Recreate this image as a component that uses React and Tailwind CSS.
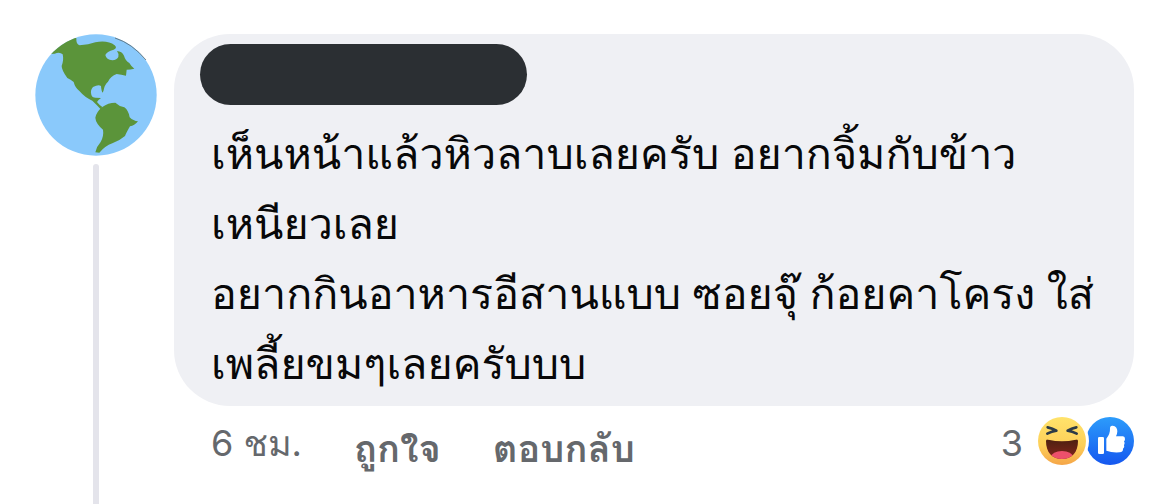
function Globe() {
  return (
    <svg viewBox="45 42 364 366" className="size-[122px] shrink-0" role="img" aria-label="Globe">
      <defs>
        <clipPath id="globe-disc">
          <circle cx="227" cy="225" r="182" />
        </clipPath>
      </defs>
      <circle cx="227" cy="225" r="182" fill="#8ac9fb" />
      <g clipPath="url(#globe-disc)" fill="#5b943a">
        <path d="M88 102 Q120 50 168 54 Q167 74 178 76 Q205 74 225 67 Q262 60 283 76 Q292 84 280 89 Q259 94 255 105 Q258 120 276 121 Q290 120 294 111 Q296 100 290 93 Q305 94 311 107 Q315 122 327 129 Q333 140 342 146 Q330 149 319 149 L317 167 Q303 164 289 162 Q271 168 263 185 Q252 195 250 211 L247 218 Q243 214 242 198 Q234 193 218 201 Q209 211 213 224 Q215 233 226 233 L242 234 Q233 240 230 246 Q236 254 246 261 L241 268 Q230 255 216 242 Q194 233 178 214 Q164 203 160 186 Q151 178 141 174 Q124 151 124 138 Q131 119 127 103 Q118 94 103 101 Z" />
        <path d="M246 261 Q263 248 285 248 Q298 260 312 262 Q325 272 328 292 Q339 303 353 304 Q342 317 329 319 Q318 338 314 348 Q295 364 276 370 Q254 378 237 398 L225 397 Q229 379 241 366 Q251 347 248 329 Q226 310 225 293 Q228 276 246 261 Z" />
      </g>
      <path d="M284 54 Q335 70 377 120" fill="none" stroke="#49504c" strokeWidth="2" />
    </svg>
  );
}

function Haha() {
  return (
    <svg viewBox="0 0 144 144" className="size-12" role="img" aria-label="Haha">
      <defs>
        <linearGradient id="haha-face" x1="0" y1="0" x2="0" y2="1">
          <stop offset="0" stopColor="#ffe36b" />
          <stop offset="0.6" stopColor="#fdcf58" />
          <stop offset="1" stopColor="#f5a548" />
        </linearGradient>
        <linearGradient id="haha-mouth" x1="0" y1="0" x2="0" y2="1">
          <stop offset="0" stopColor="#47200f" />
          <stop offset="1" stopColor="#86251d" />
        </linearGradient>
        <clipPath id="haha-mouth-clip">
          <path d="M24 72 Q24 67 31 68 Q72 78 113 68 Q120 67 120 72 C120 106 102 126 72 126 C42 126 24 106 24 72 Z" />
        </clipPath>
      </defs>
      <circle cx="72" cy="72" r="72" fill="url(#haha-face)" />
      <g clipPath="url(#haha-mouth-clip)">
        <rect x="20" y="60" width="104" height="70" fill="url(#haha-mouth)" />
        <ellipse cx="72" cy="120" rx="33" ry="18" fill="#ed506b" />
      </g>
      <g fill="none" stroke="#2c3b47" strokeWidth="8" strokeLinecap="round" strokeLinejoin="round">
        <path d="M29 31 Q44 34 55 41 Q41 43 28 50" />
        <path d="M115 31 Q100 34 89 41 Q103 43 116 50" />
      </g>
    </svg>
  );
}

function Like() {
  return (
    <svg viewBox="0 0 144 144" className="size-12" role="img" aria-label="Like">
      <defs>
        <linearGradient id="like-fill" x1="0" y1="0" x2="0" y2="1">
          <stop offset="0" stopColor="#2c9cfb" />
          <stop offset="1" stopColor="#1557ef" />
        </linearGradient>
      </defs>
      <circle cx="72" cy="72" r="72" fill="url(#like-fill)" />
      <rect x="36" y="60" width="18" height="51" rx="4" fill="#fff" />
      <path
        d="M61 65 Q73 51 72 34 Q72 25 80 26 Q94 28 94 43 Q94 50 90 58 H111 Q117 59 117 66 Q117 71 114 73 Q118 78 114 85 Q117 91 111 95 Q112 105 101 106 Q79 108 61 101 Z"
        fill="#fff"
      />
    </svg>
  );
}

const lines = [
  "เห็นหน้าแล้วหิวลาบเลยครับ อยากจิ้มกับข้าว",
  "เหนียวเลย",
  "อยากกินอาหารอีสานแบบ ซอยจุ๊ ก้อยคาโครง ใส่",
  "เพลี้ยขมๆเลยครับบบ",
];

export default function App() {
  return (
    <main className="flex min-h-screen gap-[17px] bg-white pl-[35px] pr-[33px] pt-[34px] font-[Inter,Thonburi,Loma,'Noto_Sans_Thai_Looped',Garuda,Waree,'Noto_Sans_Thai','Noto_Sans',sans-serif]">
      <div className="flex shrink-0 flex-col items-center gap-2">
        <Globe />
        <div className="w-[6px] grow rounded-t-full bg-[#e4e4eb]" />
      </div>
      <article className="min-w-0 grow">
        <div className="rounded-[56px] bg-[#eff0f4] pb-2 pl-[37px] pr-8 pt-[10px]">
          <div className="-ml-[11px] mb-[13px] h-[61px] w-[327px] rounded-full bg-[#2b2f33]" />
          <p className="text-[43px] font-medium leading-[70px] text-[#080809]">
            {lines.map((line) => (
              <span key={line} className="block whitespace-nowrap">
                {line}
              </span>
            ))}
          </p>
        </div>
        <footer className="flex items-start pl-[37px] pt-[11px] text-[36px] leading-[52px] text-[#65686c]">
          <time>6 ชม.</time>
          <button type="button" className="ml-[52px] mt-[5px] text-[38px] font-semibold">ถูกใจ</button>
          <button type="button" className="ml-[52px] mt-[5px] text-[38px] font-semibold">ตอบกลับ</button>
          <div className="ml-auto flex items-start">
            <span className="mr-[15px]">3</span>
            <div className="relative z-10 rounded-full shadow-[0_0_0_3px_white]">
              <Haha />
            </div>
            <Like />
          </div>
        </footer>
      </article>
    </main>
  );
}
